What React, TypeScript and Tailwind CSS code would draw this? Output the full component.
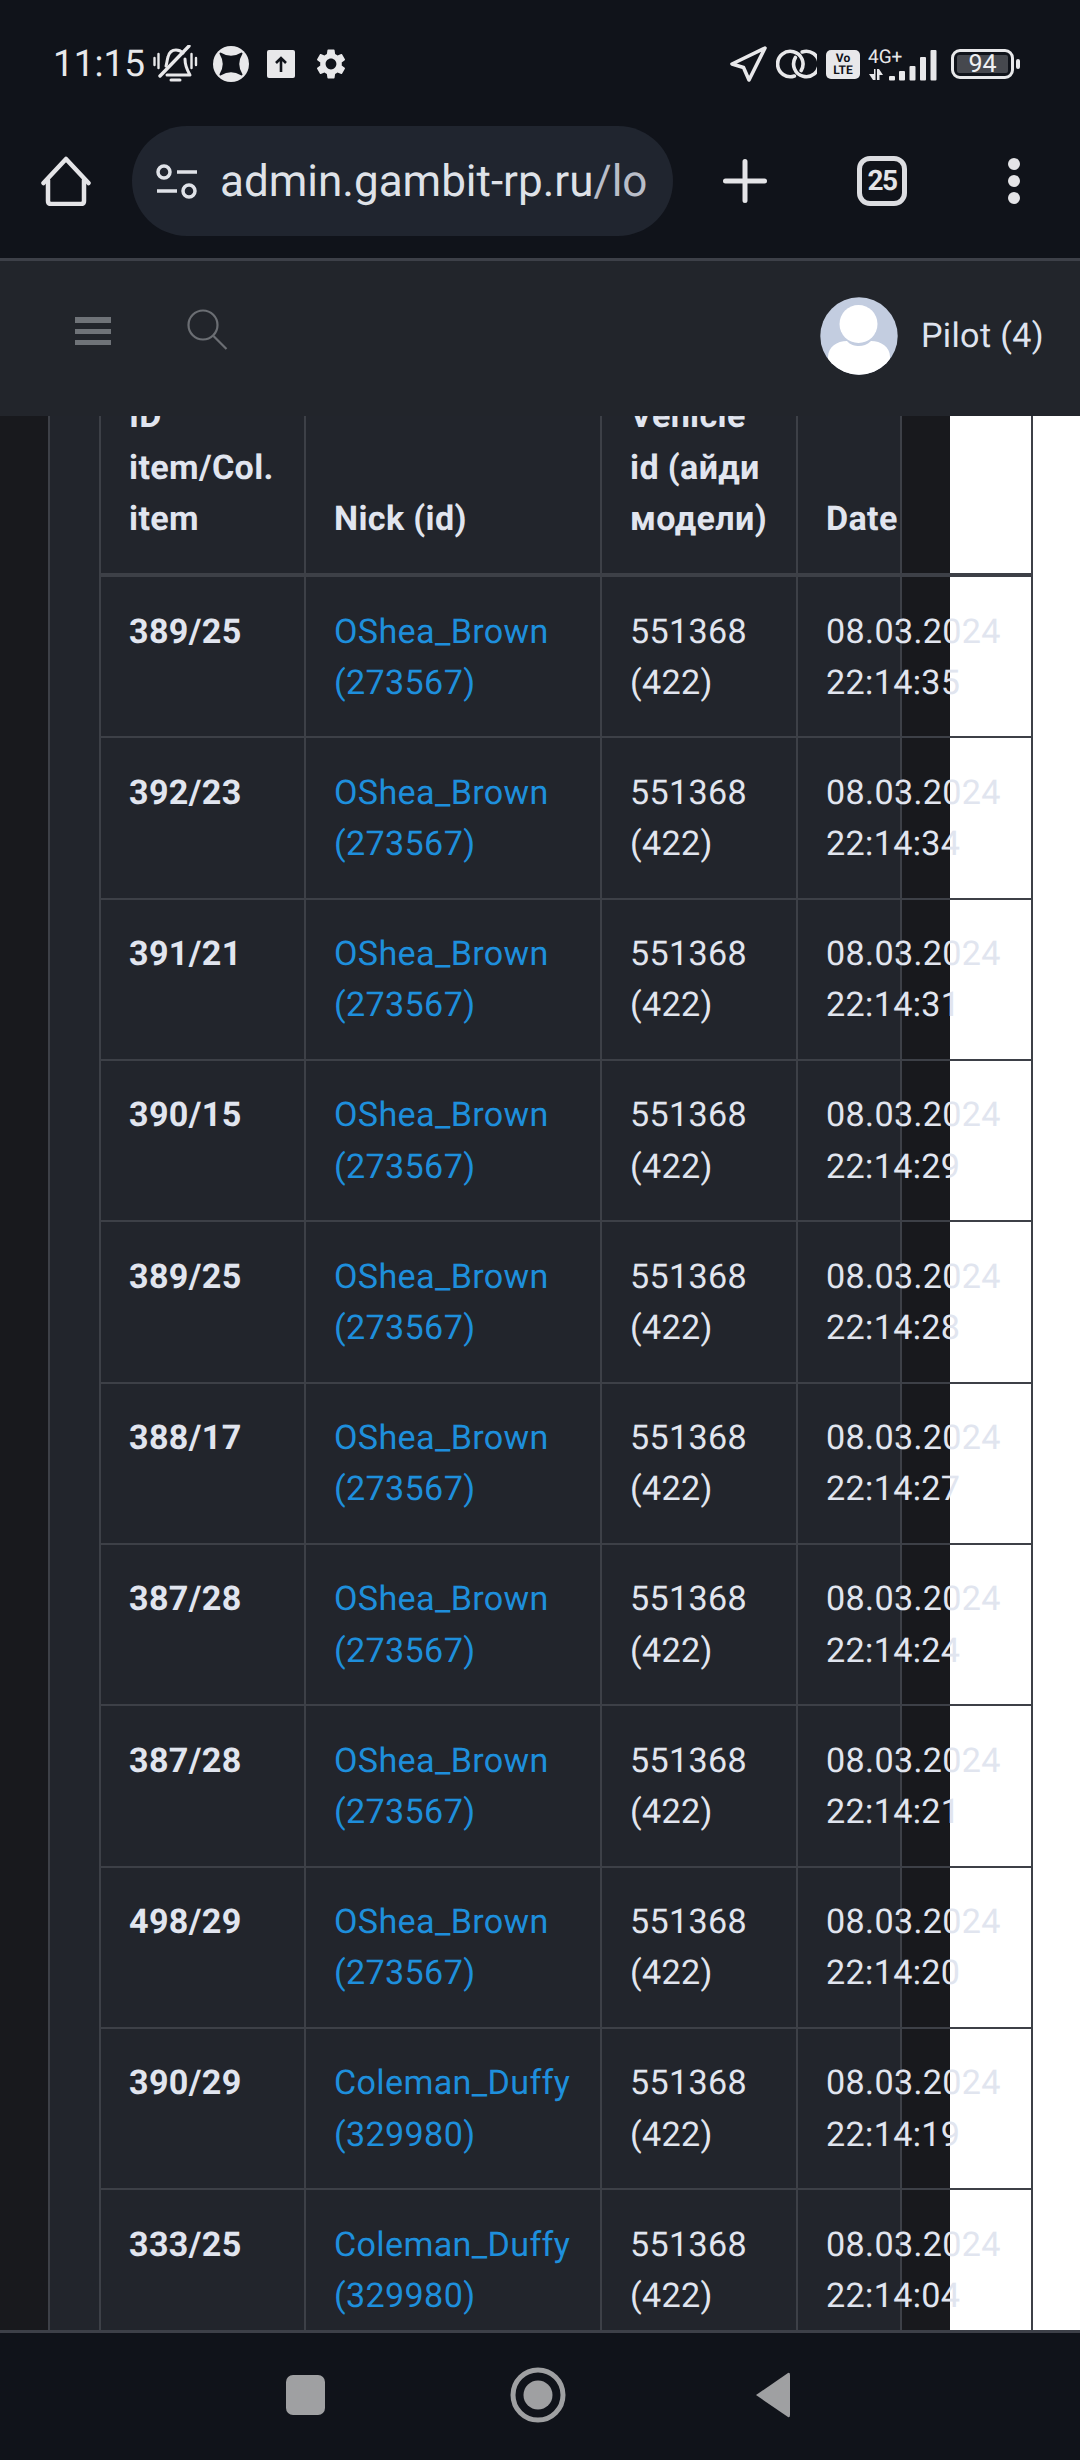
import { MdSettings } from 'react-icons/md'

const rows = [
  { item: '389/25', nick: 'OShea_Brown', id: '273567', time: '22:14:35' },
  { item: '392/23', nick: 'OShea_Brown', id: '273567', time: '22:14:34' },
  { item: '391/21', nick: 'OShea_Brown', id: '273567', time: '22:14:31' },
  { item: '390/15', nick: 'OShea_Brown', id: '273567', time: '22:14:29' },
  { item: '389/25', nick: 'OShea_Brown', id: '273567', time: '22:14:28' },
  { item: '388/17', nick: 'OShea_Brown', id: '273567', time: '22:14:27' },
  { item: '387/28', nick: 'OShea_Brown', id: '273567', time: '22:14:24' },
  { item: '387/28', nick: 'OShea_Brown', id: '273567', time: '22:14:21' },
  { item: '498/29', nick: 'OShea_Brown', id: '273567', time: '22:14:20' },
  { item: '390/29', nick: 'Coleman_Duffy', id: '329980', time: '22:14:19' },
  { item: '333/25', nick: 'Coleman_Duffy', id: '329980', time: '22:14:04' },
]

function StatusLeft() {
  return (
    <div className="flex items-center">
      <span className="w-[100px] text-[37px] leading-none text-[#e8e8ea]">11:15</span>
      <svg width="45" height="38" viewBox="0 0 45 38" fill="none" stroke="#e8e8ea" strokeLinecap="round">
        <path d="M36 1 7 31" strokeWidth="3.4" />
        <path d="M13 21c1-3 1-6 2-9 1-4 4-7 8-7 3 0 5 1 7 3M32 14c0 6 2 11 5 16H14" strokeWidth="3" strokeLinejoin="round" />
        <path d="M18 35h9" strokeWidth="3" />
        <path d="M1.500 13v7M5.500 9v14M38.500 9v14M43 13v7" strokeWidth="2.400" />
      </svg>
      <svg className="ml-[15px]" width="36" height="36" viewBox="0 0 36 36">
        <circle cx="18" cy="18" r="18" fill="#e8e8ea" />
        <path d="M7.500 7.500Q18 14 28.500 7.500 22 18 28.500 28.500 18 22 7.500 28.500 14 18 7.500 7.500Z" fill="#10131a" stroke="#10131a" strokeWidth="2" strokeLinejoin="round" />
      </svg>
      <svg className="ml-[18px]" width="28" height="28" viewBox="0 0 28 28">
        <rect width="28" height="28" rx="2" fill="#e8e8ea" />
        <path d="M14 22V8M9 13l5-5 5 5" fill="none" stroke="#10131a" strokeWidth="2.600" />
      </svg>
      <MdSettings className="ml-[18px] text-[#e8e8ea]" size={36} />
    </div>
  )
}

function StatusRight() {
  return (
    <div className="flex items-center">
      <svg width="37" height="36" viewBox="0 0 37 36" fill="none" stroke="#e8e8ea" strokeWidth="3.600" strokeLinejoin="round">
        <path d="M35 2 2 18l11.500 3.500L19 34Z" />
      </svg>
      <svg className="ml-[9px]" width="41" height="30" viewBox="-2 0 41 30" fill="none" stroke="#e8e8ea" strokeWidth="3.600" strokeLinecap="round">
        <path d="M16.400 27A12.700 12.700 0 1 1 23.200 21.500" />
        <path d="M24.200 3A12.700 12.700 0 1 1 17.400 8.500" />
      </svg>
      <div className="ml-[9px] flex h-[29px] w-[34px] flex-col items-center justify-center rounded-[5px] bg-[#e8e8ea] text-[12px] font-bold leading-[12px] text-[#10131a]">
        <span>Vo</span>
        <span>LTE</span>
      </div>
      <svg className="ml-[8px]" width="69" height="34" viewBox="0 0 69 34">
        <text x="0" y="16" fontSize="19" fill="#e8e8ea" fontFamily="Roboto, sans-serif">4G+</text>
        <path d="M1 27h5v-5h1.500v11H5l-4-6ZM9 33V22h2l4 6h-3.500v5Z" fill="#e8e8ea" />
        <g fill="#e8e8ea">
          <rect x="21" y="29" width="6" height="4.500" rx="1" />
          <rect x="31" y="24" width="6" height="9.500" rx="1" />
          <rect x="41.500" y="19" width="6" height="14.500" rx="1" />
          <rect x="52" y="10" width="6" height="23.500" rx="1" />
          <rect x="62.500" y="3" width="6" height="30.500" rx="1" />
        </g>
      </svg>
      <div className="ml-[14px] flex h-[30px] w-[63px] items-center justify-center rounded-[9px] border-[3px] border-[#e8e8ea] p-[3px]">
        <div className="flex h-full w-full items-center justify-center rounded-[2px] bg-[#46484e] text-[25px] leading-none text-[#f0f0f2]">94</div>
      </div>
      <div className="ml-[2px] h-[10px] w-[4px] rounded-[2px] bg-[#e8e8ea]" />
    </div>
  )
}

function Toolbar() {
  return (
    <div className="flex h-[132px] items-start pl-[41px]">
      <div className="flex h-[110px] w-[50px] items-center">
        <svg width="50" height="50" viewBox="0 0 50 50" fill="none" stroke="#e4e4e7" strokeWidth="4.500" strokeLinecap="round" strokeLinejoin="round">
          <path d="M2.500 27 25 3l22.500 24" />
          <path d="M7 24v21q0 3 3 3h30q3 0 3-3V24" />
        </svg>
      </div>
      <div className="ml-[41px] flex h-[110px] w-[541px] items-center overflow-hidden rounded-full bg-[#20252f] pl-[24px]">
        <svg className="shrink-0" width="42" height="36" viewBox="0 0 42 36" fill="none" stroke="#dfe2e8" strokeWidth="3.500">
          <circle cx="8" cy="9" r="6" />
          <path d="M21 9h20M1 28h20" />
          <circle cx="33" cy="28" r="6" />
        </svg>
        <span className="ml-[22px] whitespace-nowrap text-[44px] leading-none text-[#dfe2e8]">
          admin.gambit-rp.ru<span className="text-[#b9bdc8]">/lo</span>
        </span>
      </div>
      <div className="ml-[50px] flex h-[110px] w-[44px] items-center">
        <svg width="44" height="44" viewBox="0 0 44 44" stroke="#e4e4e7" strokeWidth="5" strokeLinecap="round">
          <path d="M22 2.500v39M2.500 22h39" />
        </svg>
      </div>
      <div className="ml-[90px] flex h-[110px] items-center">
        <div className="flex h-[50px] w-[50px] items-center justify-center rounded-[13px] border-[5px] border-[#dcdde1] text-[28px] font-bold leading-none tracking-[-1.500px] text-[#e4e4e7]">25</div>
      </div>
      <div className="ml-[101px] flex h-[110px] flex-col items-center justify-center gap-[5px]">
        <div className="h-[12px] w-[12px] rounded-full bg-[#e4e4e7]" />
        <div className="h-[12px] w-[12px] rounded-full bg-[#e4e4e7]" />
        <div className="h-[12px] w-[12px] rounded-full bg-[#e4e4e7]" />
      </div>
    </div>
  )
}

function AppHeader() {
  return (
    <div className="relative z-10 flex h-[155px] shrink-0 items-center bg-[#22252b] pb-[5px] pl-[75px] pr-[36px]">
      <div className="mb-[11px] flex w-[36px] flex-col gap-[6px]">
        <div className="h-[6px] bg-[#6f7378]" />
        <div className="h-[5px] bg-[#6f7378]" />
        <div className="h-[5px] bg-[#6f7378]" />
      </div>
      <svg className="mb-[14px] ml-[76px]" width="41" height="41" viewBox="0 0 41 41" fill="none" stroke="#6b6e73" strokeWidth="2.200">
        <circle cx="16" cy="16" r="14.500" />
        <path d="m26.500 27 13 13" />
      </svg>
      <svg className="ml-auto" width="78" height="78" viewBox="0 0 78 78">
        <defs>
          <clipPath id="avatar-clip">
            <circle cx="39" cy="39" r="38.700" />
          </clipPath>
        </defs>
        <circle cx="39" cy="39" r="38.700" fill="#c3cde0" />
        <g clipPath="url(#avatar-clip)" fill="#fff">
          <circle cx="38.500" cy="27" r="19" />
          <path d="M8 78V60c0-10 9-16 19-16 3 4 8 5 12 5s8-1 12-5c10 0 19 6 19 16v18Z" />
        </g>
      </svg>
      <span className="ml-[23px] text-[34.125px] leading-none tracking-[0.35px] text-[#dfe3ee]">Pilot (4)</span>
    </div>
  )
}

function LogTable() {
  const headCell = 'flex h-[211px] items-end border-b-[4px] border-l-2 border-[#3d4047] pb-[28px] pl-[28px] font-bold'
  const cell = 'h-[161.33px] border-b-2 border-l-2 border-[#3d4047] pl-[28px] pt-[29.5px]'
  return (
    <div className="col-start-1 row-start-1 ml-[99px] mt-[-50px] grid w-[934px] grid-cols-[205px_296px_196px_237px] self-start text-[34.125px] leading-[51.19px] tracking-[0.35px] text-[#e1e5ef]">
      <div className={headCell}>
        <div>
          ID
          <br />
          item/Col.
          <br />
          item
        </div>
      </div>
      <div className={headCell}>Nick (id)</div>
      <div className={headCell}>
        <div>
          Vehicle
          <br />
          id (айди
          <br />
          модели)
        </div>
      </div>
      <div className={`${headCell} border-r-2`}>Date</div>
      {rows.map((row, i) => (
        <div key={i} className="contents">
          <div className={`${cell} font-bold`}>{row.item}</div>
          <div className={`${cell} text-[#1e8fdc]`}>
            {row.nick}
            <br />({row.id})
          </div>
          <div className={cell}>
            551368
            <br />
            (422)
          </div>
          <div className={`${cell} whitespace-nowrap border-r-2`}>
            08.03.2024
            <br />
            {row.time}
          </div>
        </div>
      ))}
    </div>
  )
}

export default function App() {
  return (
    <div className="flex h-screen w-full flex-col overflow-hidden bg-[#10131a] [font-family:Roboto,sans-serif] [text-rendering:geometricPrecision]">
      <div className="flex h-[126px] shrink-0 items-center justify-between pl-[53px] pr-[60px] pt-[2px]">
        <StatusLeft />
        <StatusRight />
      </div>
      <Toolbar />
      <div className="h-[3px] shrink-0 bg-[#3d4048]" />
      <AppHeader />
      <div className="grid min-h-0 flex-1 grid-cols-1 grid-rows-1 overflow-hidden">
        <div className="col-start-1 row-start-1 flex min-h-0">
          <div className="w-[48px] bg-[#18191d]" />
          <div className="w-[854px] border-x-2 border-[#3d4047] bg-[#22252c]" />
          <div className="w-[48px] bg-[#18191d]" />
          <div className="flex-1 bg-white" />
        </div>
        <LogTable />
      </div>
      <div className="h-[3px] shrink-0 bg-[#3d4048]" />
      <div className="flex h-[127px] shrink-0 items-center pb-[3px] pl-[286px]">
        <div className="h-[40px] w-[39px] rounded-[7px] bg-[#9fa0a2]" />
        <svg className="ml-[185px]" width="56" height="56" viewBox="0 0 56 56" fill="none">
          <circle cx="28" cy="28" r="25" stroke="#9fa0a2" strokeWidth="5" />
          <circle cx="28" cy="28" r="14.500" fill="#9fa0a2" />
        </svg>
        <svg className="ml-[188px]" width="37" height="48" viewBox="0 0 37 48">
          <path d="M34 2 2 24l32 22q2 1 2-2V4q0-3-2-2Z" fill="#9fa0a2" />
        </svg>
      </div>
    </div>
  )
}
